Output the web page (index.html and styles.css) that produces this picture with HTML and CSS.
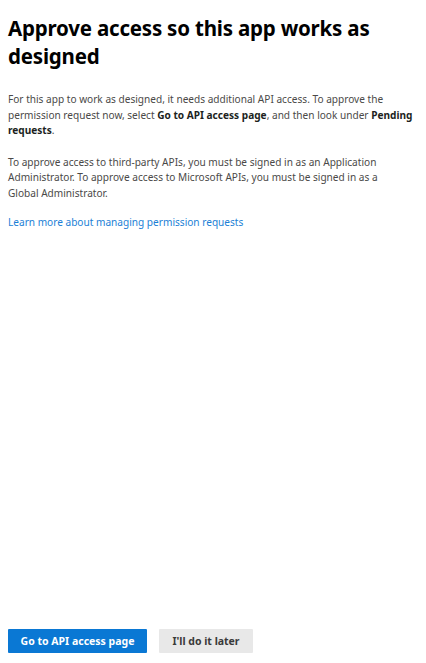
FILE: index.html
```html
<!DOCTYPE html>
<html lang="en">
<head>
<meta charset="utf-8">
<title>Approve access</title>
<link rel="stylesheet" href="styles.css">
</head>
<body>
<div class="page">
  <main class="content">
    <h1 class="title">Approve access so this app works as designed</h1>
    <p class="text">For this app to work as designed, it needs additional API access. To approve the permission request now, select <b>Go to API access page</b>, and then look under <b>Pending requests</b>.</p>
    <p class="text text-narrow">To approve access to third-party APIs, you must be signed in as an Application Administrator. To approve access to Microsoft APIs, you must be signed in as a Global Administrator.</p>
    <p class="text link-row"><a class="link" href="#">Learn more about managing permission requests</a></p>
  </main>
  <footer class="actions">
    <button class="btn btn-primary" type="button">Go to API access page</button>
    <button class="btn btn-secondary" type="button">I'll do it later</button>
  </footer>
</div>
</body>
</html>
```

FILE: styles.css
```css
html, body {
  margin: 0;
  padding: 0;
  background: #ffffff;
}
body {
  font-family: "Noto Sans", "Open Sans", "Liberation Sans", sans-serif;
}
.page {
  box-sizing: border-box;
  min-height: 100vh;
  padding: 0 13px 10px 8px;
  display: flex;
  flex-direction: column;
}
.content {
  flex: 1;
}
.title {
  margin: 14px 0 22px 0;
  font-size: 20.5px;
  line-height: 28px;
  font-weight: 700;
  color: #000;
  letter-spacing: -0.2px;
}
.text {
  margin: 0 0 16px 0;
  font-size: 10.1px;
  line-height: 15.5px;
  color: #4a4948;
}
.text-narrow {
  max-width: 395px;
}
.text b {
  color: #201f1e;
  font-weight: 700;
}
.link-row {
  margin-top: -2px;
}
.link {
  color: #1b7fd6;
  text-decoration: none;
}
.actions {
  display: flex;
  gap: 12px;
}
.btn {
  height: 24px;
  border: none;
  border-radius: 1px;
  font-family: inherit;
  font-size: 10.5px;
  font-weight: 700;
  padding: 0;
}
.btn-primary {
  width: 139px;
  background: #0a78d4;
  color: #fff;
}
.btn-secondary {
  width: 94px;
  background: #e8e8e8;
  color: #3a3a3a;
}
```
